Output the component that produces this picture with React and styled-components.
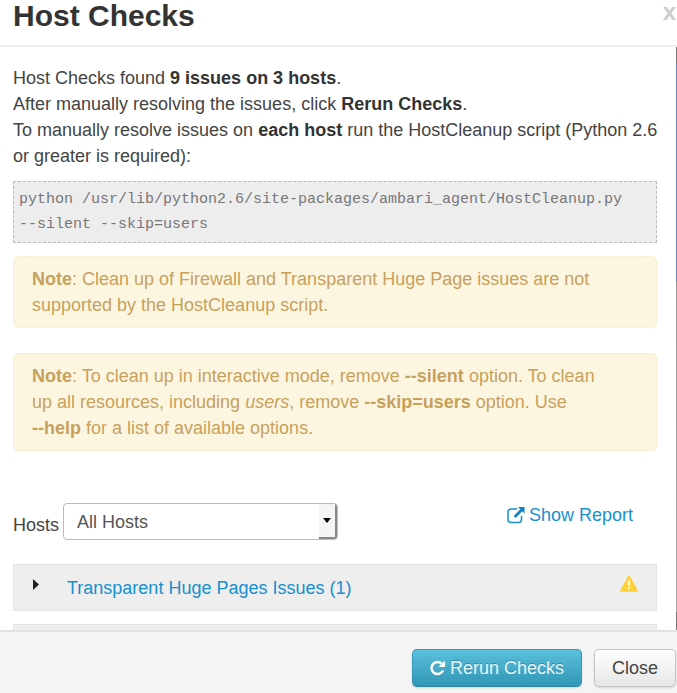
import React from "react";
import styled, { createGlobalStyle, css } from "styled-components";

const GlobalStyle = createGlobalStyle`
  *, *::before, *::after { box-sizing: border-box; }
  body {
    margin: 0;
    background: #fff;
    color: #444;
    font-family: "Liberation Sans", Arial, sans-serif;
    font-size: 18px;
    line-height: 26px;
  }
`;

const Modal = styled.main`
  display: flex;
  flex-direction: column;
  height: 100vh;
  overflow: hidden;
`;

const Header = styled.header`
  display: flex;
  justify-content: space-between;
  align-items: flex-start;
  padding: 0 1px 13px 13px;
  border-bottom: 2px solid #f0f0f0;
`;

const Title = styled.h1`
  margin: 0;
  color: #333;
  font-size: 30px;
  line-height: 32px;
`;

const CloseIcon = styled.button`
  padding: 0;
  border: 0;
  background: none;
  color: #ccc;
  font: bold 24px/24px "Liberation Sans", Arial, sans-serif;
  cursor: pointer;
`;

const Middle = styled.div`
  display: flex;
  flex: 1;
  min-height: 0;
`;

const Content = styled.section`
  flex: 1;
  min-width: 0;
  padding: 18px 19px 0 13px;
  overflow-y: auto;
  scrollbar-width: none;
`;

const Backdrop = styled.div`
  width: 1px;
  background: linear-gradient(#777 16px, #6482b4 16px, #6482b4 235px, #999 235px, #aaa 565px, #777 565px);
`;

const Intro = styled.p`
  margin: 0 -6px 12px 0;
`;

const Strong = styled.strong`
  color: ${(p) => (p.$note ? "inherit" : "#333")};
  white-space: ${(p) => (p.$note ? "nowrap" : "normal")};
`;

const Command = styled.pre`
  margin: 0 0 13px;
  padding: 5px 5px;
  border: 1px dashed #bbb;
  background: #ededed;
  color: #777;
  font: 15px/25px "Liberation Mono", "Courier New", monospace;
  white-space: pre-wrap;
`;

const Flag = styled.span`
  white-space: nowrap;
`;

const Note = styled.p`
  margin: 0 0 25px;
  padding: 9px 44px 9px 18px;
  border: 1px solid #fbeed5;
  border-radius: 5px;
  background: #fcf6e1;
  color: #c7a15c;
`;

const Filters = styled.div`
  display: flex;
  justify-content: space-between;
  align-items: flex-start;
  margin-top: 52px;
  padding-right: 24px;
`;

const HostField = styled.label`
  display: flex;
  align-items: flex-end;
  gap: 4px;
  line-height: 30px;
`;

const SelectFrame = styled.span`
  display: flex;
  width: 275px;
  height: 37px;
  border: 1px solid #bbb;
  border-radius: 4px;
  background: #fff;
  overflow: hidden;
`;

const Select = styled.select`
  flex: 1;
  min-width: 0;
  padding: 0 13px;
  border: 0;
  outline: 0;
  appearance: none;
  background: transparent;
  color: #555;
  font: inherit;
`;

const SelectArrow = styled.span`
  display: flex;
  align-items: center;
  justify-content: center;
  width: 18px;
  margin-left: -18px;
  border-right: 2px solid #888;
  border-bottom: 2px solid #888;
  background: #f5f5f3;
  pointer-events: none;
`;

const ReportLink = styled.a`
  display: flex;
  align-items: center;
  gap: 4px;
  color: #1690cf;
  line-height: 24px;
  text-decoration: none;
`;

const Panel = styled.button`
  display: flex;
  align-items: flex-start;
  width: 100%;
  height: 47px;
  margin: 24px 0 13px;
  padding: 10px 18px;
  border: 1px solid #e3e3e3;
  background: #eee;
  color: #1690cf;
  font: inherit;
  text-align: left;
  cursor: pointer;

  & + & { margin-top: 0; }
`;

const PanelLabel = styled.span`
  flex: 1;
  margin-left: 28px;
`;

const Footer = styled.footer`
  display: flex;
  justify-content: flex-end;
  gap: 12px;
  padding: 17px 1px 6px;
  border-top: 2px solid #e2e2e2;
  background: #f4f4f4;
`;

const Button = styled.button`
  display: flex;
  align-items: center;
  gap: 5px;
  height: 38px;
  padding: 0 17px;
  border: 1px solid #c4c4c4;
  border-radius: 5px;
  background: linear-gradient(#fff, #e6e6e6);
  box-shadow: 0 1px 2px rgba(0, 0, 0, 0.12);
  color: #444;
  font: inherit;
  cursor: pointer;

  ${(p) => p.$primary && css`
    border-color: #3699b6 #3699b6 #2b85a0;
    background: linear-gradient(#5bc0de, #2f96b4);
    color: #e8f6fa;
    text-shadow: 0 -1px 0 rgba(0, 0, 0, 0.25);
  `}
`;

const Icon = styled.svg`
  display: block;
  flex: none;
`;

function ShareIcon() {
  return (
    <Icon width="18" height="18" viewBox="0 0 18 18" aria-hidden="true">
      <path d="M10 3H4a3 3 0 0 0-3 3v7.500a3 3 0 0 0 3 3h7.500a3 3 0 0 0 3-3V10" fill="none" stroke="#1690cf" strokeWidth="1.500" />
      <path d="M11 1h6.500v6.500l-2.200-2.200-6.600 6.600-2-2 6.600-6.600z" fill="#1184c4" />
    </Icon>
  );
}

function RepeatIcon() {
  return (
    <Icon width="15" height="16" viewBox="0 0 15 16" aria-hidden="true">
      <path d="M12 4A6 6 0 1 0 13 10.500" fill="none" stroke="#fff" strokeWidth="2.500" />
      <path d="M15 0.500v6.500H8.500z" fill="#fff" />
    </Icon>
  );
}

function WarningIcon() {
  return (
    <Icon width="18" height="17" viewBox="0 0 18 17" aria-hidden="true">
      <path d="M9 .5c.5 0 .8.300 1 .700l7.700 14c.4.800 0 1.600-.9 1.600H1.200c-.9 0-1.300-.8-.9-1.600l7.700-14c.2-.4.500-.7 1-.7z" fill="#ffcf38" />
      <path d="M7.800 5.500h2.400l-.3 5.300H8.100zM7.900 12h2.200v2.300H7.900z" fill="#fffbe6" />
    </Icon>
  );
}

function CaretRight() {
  return (
    <Icon width="7" height="18" viewBox="0 0 7 18" aria-hidden="true">
      <path d="M1 4l6 5.500L1 15z" fill="#222" />
    </Icon>
  );
}

function CaretDown() {
  return (
    <Icon width="8" height="5" viewBox="0 0 8 5" aria-hidden="true">
      <path d="M0 0h8L4 5z" fill="#000" />
    </Icon>
  );
}

export default function App() {
  return (
    <>
      <GlobalStyle />
      <Modal>
        <Header>
          <Title>Host Checks</Title>
          <CloseIcon type="button">x</CloseIcon>
        </Header>
        <Middle>
          <Content>
            <Intro>
              Host Checks found <Strong>9 issues on 3 hosts</Strong>.<br />
              After manually resolving the issues, click <Strong>Rerun Checks</Strong>.<br />
              To manually resolve issues on <Strong>each host</Strong> run the HostCleanup script (Python 2.6 or
              greater is required):
            </Intro>
            <Command>
              python /usr/lib/python2.6/site-packages/ambari_agent/HostCleanup.py <Flag>--silent</Flag>{" "}
              <Flag>--skip=users</Flag>
            </Command>
            <Note>
              <Strong $note>Note</Strong>: Clean up of Firewall and Transparent Huge Page issues are not supported by
              the HostCleanup script.
            </Note>
            <Note>
              <Strong $note>Note</Strong>: To clean up in interactive mode, remove <Strong $note>--silent</Strong>{" "}
              option. To clean up all resources, including <em>users</em>, remove{" "}
              <Strong $note>--skip=users</Strong> option. Use <Strong $note>--help</Strong> for a list of available
              options.
            </Note>
            <Filters>
              <HostField>
                Hosts
                <SelectFrame>
                  <Select defaultValue="all">
                    <option value="all">All Hosts</option>
                  </Select>
                  <SelectArrow>
                    <CaretDown />
                  </SelectArrow>
                </SelectFrame>
              </HostField>
              <ReportLink href="#report">
                <ShareIcon />
                Show Report
              </ReportLink>
            </Filters>
            <Panel type="button">
              <CaretRight />
              <PanelLabel>Transparent Huge Pages Issues (1)</PanelLabel>
              <WarningIcon />
            </Panel>
            <Panel as="div" />
          </Content>
          <Backdrop />
        </Middle>
        <Footer>
          <Button type="button" $primary>
            <RepeatIcon />
            Rerun Checks
          </Button>
          <Button type="button">Close</Button>
        </Footer>
      </Modal>
    </>
  );
}
